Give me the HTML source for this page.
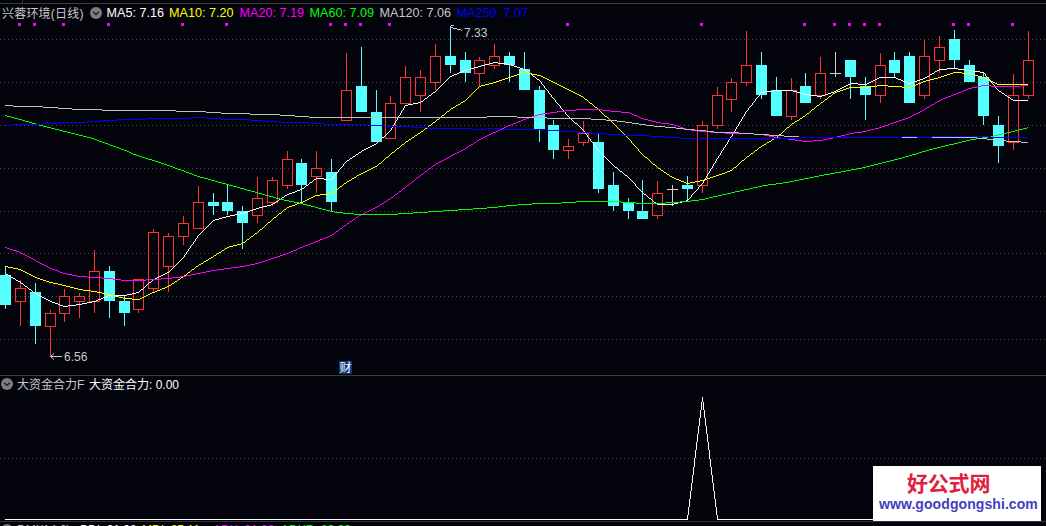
<!DOCTYPE html>
<html lang="zh-CN"><head><meta charset="utf-8"><title>兴蓉环境(日线)</title>
<style>
html,body{margin:0;padding:0;background:#03030b;}
body{width:1046px;height:526px;overflow:hidden;position:relative;font-family:"Liberation Sans","Noto Sans CJK SC",sans-serif;}
svg{position:absolute;left:0;top:0;display:block}
.gd{stroke:#454545;stroke-width:1;stroke-dasharray:1 3}
.t{position:absolute;white-space:nowrap;font-size:12px;line-height:14px;color:#c8c8c8}
.t span{position:absolute;top:0}
.t span.l{font-size:12.6px;top:1px}
.ic{position:absolute;width:12px;height:12px;border-radius:50%;background:#7d7d7d}
.ic svg{left:0;top:0}
#wm{position:absolute;left:873px;top:466px;width:168px;height:55px;background:#fff}
#wm .a{position:absolute;left:34px;top:5px;font-size:21px;line-height:26px;font-weight:bold;color:#e0203c;white-space:nowrap;letter-spacing:-0.2px}
#wm .b{position:absolute;left:6px;top:29.5px;font-size:14px;line-height:16px;font-weight:bold;color:#4040c0;white-space:nowrap;letter-spacing:0.08px}
#cai{position:absolute;left:339px;top:361px;width:13px;height:13px;background:#0a3a7c;color:#fff;font-size:12px;line-height:15.5px;text-align:center;overflow:hidden}
</style></head><body>
<svg width="1046" height="526" viewBox="0 0 1046 526">
<g shape-rendering="crispEdges">
<line x1="0" y1="39.5" x2="1046" y2="39.5" class="gd"/>
<line x1="0" y1="82.5" x2="1046" y2="82.5" class="gd"/>
<line x1="0" y1="125.5" x2="1046" y2="125.5" class="gd"/>
<line x1="0" y1="168.5" x2="1046" y2="168.5" class="gd"/>
<line x1="0" y1="211.5" x2="1046" y2="211.5" class="gd"/>
<line x1="0" y1="253.5" x2="1046" y2="253.5" class="gd"/>
<line x1="0" y1="296.5" x2="1046" y2="296.5" class="gd"/>
<line x1="0" y1="339.5" x2="1046" y2="339.5" class="gd"/>
<line x1="0" y1="458.5" x2="1046" y2="458.5" class="gd"/>
<rect x="0" y="3" width="1046" height="1" fill="#3c3c3c"/>
<rect x="22" y="0" width="1" height="3" fill="#3c3c3c"/>
<rect x="0" y="375" width="1046" height="1" fill="#3c3c3c"/>
<rect x="0" y="521" width="1046" height="1" fill="#333"/>
<rect x="5" y="266" width="1" height="43" fill="#54ffff"/>
<rect x="0" y="275" width="11" height="30" fill="#54ffff"/>
<rect x="20" y="280" width="1" height="8" fill="#ff3232"/>
<rect x="20" y="301" width="1" height="25" fill="#ff3232"/>
<rect x="15.5" y="288.5" width="10" height="13" fill="none" stroke="#ff3232" stroke-width="1"/>
<rect x="35" y="283" width="1" height="61" fill="#54ffff"/>
<rect x="30" y="292" width="11" height="34" fill="#54ffff"/>
<rect x="50" y="310" width="1" height="3" fill="#ff3232"/>
<rect x="50" y="326" width="1" height="30" fill="#ff3232"/>
<rect x="45.5" y="313.5" width="10" height="13" fill="none" stroke="#ff3232" stroke-width="1"/>
<rect x="64" y="289" width="1" height="7" fill="#ff3232"/>
<rect x="64" y="313" width="1" height="9" fill="#ff3232"/>
<rect x="59.5" y="296.5" width="10" height="17" fill="none" stroke="#ff3232" stroke-width="1"/>
<rect x="79" y="293" width="1" height="3" fill="#ff3232"/>
<rect x="79" y="301" width="1" height="17" fill="#ff3232"/>
<rect x="74.5" y="296.5" width="10" height="5" fill="none" stroke="#ff3232" stroke-width="1"/>
<rect x="94" y="250" width="1" height="21" fill="#ff3232"/>
<rect x="94" y="301" width="1" height="12" fill="#ff3232"/>
<rect x="89.5" y="271.5" width="10" height="30" fill="none" stroke="#ff3232" stroke-width="1"/>
<rect x="109" y="266" width="1" height="52" fill="#54ffff"/>
<rect x="104" y="271" width="11" height="30" fill="#54ffff"/>
<rect x="124" y="296" width="1" height="30" fill="#54ffff"/>
<rect x="119" y="301" width="11" height="12" fill="#54ffff"/>
<rect x="138" y="309" width="1" height="4" fill="#ff3232"/>
<rect x="133.5" y="279.5" width="10" height="30" fill="none" stroke="#ff3232" stroke-width="1"/>
<rect x="153" y="229" width="1" height="3" fill="#ff3232"/>
<rect x="153" y="288" width="1" height="4" fill="#ff3232"/>
<rect x="148.5" y="232.5" width="10" height="56" fill="none" stroke="#ff3232" stroke-width="1"/>
<rect x="168" y="233" width="1" height="3" fill="#ff3232"/>
<rect x="168" y="266" width="1" height="26" fill="#ff3232"/>
<rect x="163.5" y="236.5" width="10" height="30" fill="none" stroke="#ff3232" stroke-width="1"/>
<rect x="183" y="216" width="1" height="7" fill="#ff3232"/>
<rect x="183" y="236" width="1" height="9" fill="#ff3232"/>
<rect x="178.5" y="223.5" width="10" height="13" fill="none" stroke="#ff3232" stroke-width="1"/>
<rect x="198" y="186" width="1" height="16" fill="#ff3232"/>
<rect x="193.5" y="202.5" width="10" height="26" fill="none" stroke="#ff3232" stroke-width="1"/>
<rect x="213" y="193" width="1" height="22" fill="#54ffff"/>
<rect x="208" y="202" width="11" height="4" fill="#54ffff"/>
<rect x="227" y="185" width="1" height="30" fill="#54ffff"/>
<rect x="222" y="202" width="11" height="9" fill="#54ffff"/>
<rect x="242" y="206" width="1" height="43" fill="#54ffff"/>
<rect x="237" y="211" width="11" height="12" fill="#54ffff"/>
<rect x="257" y="177" width="1" height="21" fill="#ff3232"/>
<rect x="257" y="215" width="1" height="8" fill="#ff3232"/>
<rect x="252.5" y="198.5" width="10" height="17" fill="none" stroke="#ff3232" stroke-width="1"/>
<rect x="272" y="177" width="1" height="3" fill="#ff3232"/>
<rect x="272" y="202" width="1" height="4" fill="#ff3232"/>
<rect x="267.5" y="180.5" width="10" height="22" fill="none" stroke="#ff3232" stroke-width="1"/>
<rect x="287" y="151" width="1" height="8" fill="#ff3232"/>
<rect x="287" y="185" width="1" height="4" fill="#ff3232"/>
<rect x="282.5" y="159.5" width="10" height="26" fill="none" stroke="#ff3232" stroke-width="1"/>
<rect x="301" y="159" width="1" height="43" fill="#54ffff"/>
<rect x="296" y="163" width="11" height="22" fill="#54ffff"/>
<rect x="316" y="151" width="1" height="17" fill="#ff3232"/>
<rect x="316" y="176" width="1" height="17" fill="#ff3232"/>
<rect x="311.5" y="168.5" width="10" height="8" fill="none" stroke="#ff3232" stroke-width="1"/>
<rect x="331" y="159" width="1" height="52" fill="#54ffff"/>
<rect x="326" y="172" width="11" height="30" fill="#54ffff"/>
<rect x="346" y="53" width="1" height="37" fill="#ff3232"/>
<rect x="341.5" y="90.5" width="10" height="30" fill="none" stroke="#ff3232" stroke-width="1"/>
<rect x="361" y="47" width="1" height="65" fill="#54ffff"/>
<rect x="356" y="86" width="11" height="26" fill="#54ffff"/>
<rect x="376" y="90" width="1" height="52" fill="#54ffff"/>
<rect x="371" y="112" width="11" height="30" fill="#54ffff"/>
<rect x="390" y="96" width="1" height="7" fill="#ff3232"/>
<rect x="385.5" y="103.5" width="10" height="35" fill="none" stroke="#ff3232" stroke-width="1"/>
<rect x="405" y="66" width="1" height="11" fill="#ff3232"/>
<rect x="400.5" y="77.5" width="10" height="26" fill="none" stroke="#ff3232" stroke-width="1"/>
<rect x="420" y="70" width="1" height="7" fill="#ff3232"/>
<rect x="420" y="95" width="1" height="17" fill="#ff3232"/>
<rect x="415.5" y="77.5" width="10" height="18" fill="none" stroke="#ff3232" stroke-width="1"/>
<rect x="435" y="44" width="1" height="12" fill="#ff3232"/>
<rect x="435" y="82" width="1" height="8" fill="#ff3232"/>
<rect x="430.5" y="56.5" width="10" height="26" fill="none" stroke="#ff3232" stroke-width="1"/>
<rect x="450" y="26" width="1" height="47" fill="#54ffff"/>
<rect x="445" y="56" width="11" height="9" fill="#54ffff"/>
<rect x="465" y="52" width="1" height="30" fill="#54ffff"/>
<rect x="460" y="60" width="11" height="13" fill="#54ffff"/>
<rect x="479" y="57" width="1" height="3" fill="#ff3232"/>
<rect x="479" y="73" width="1" height="13" fill="#ff3232"/>
<rect x="474.5" y="60.5" width="10" height="13" fill="none" stroke="#ff3232" stroke-width="1"/>
<rect x="494" y="44" width="1" height="12" fill="#ff3232"/>
<rect x="494" y="65" width="1" height="4" fill="#ff3232"/>
<rect x="489.5" y="56.5" width="10" height="9" fill="none" stroke="#ff3232" stroke-width="1"/>
<rect x="509" y="52" width="1" height="30" fill="#54ffff"/>
<rect x="504" y="56" width="11" height="9" fill="#54ffff"/>
<rect x="524" y="52" width="1" height="38" fill="#54ffff"/>
<rect x="519" y="69" width="11" height="21" fill="#54ffff"/>
<rect x="539" y="86" width="1" height="56" fill="#54ffff"/>
<rect x="534" y="90" width="11" height="39" fill="#54ffff"/>
<rect x="553" y="120" width="1" height="39" fill="#54ffff"/>
<rect x="548" y="125" width="11" height="25" fill="#54ffff"/>
<rect x="568" y="139" width="1" height="7" fill="#ff3232"/>
<rect x="568" y="150" width="1" height="9" fill="#ff3232"/>
<rect x="563.5" y="146.5" width="10" height="4" fill="none" stroke="#ff3232" stroke-width="1"/>
<rect x="583" y="121" width="1" height="12" fill="#ff3232"/>
<rect x="583" y="142" width="1" height="4" fill="#ff3232"/>
<rect x="578.5" y="133.5" width="10" height="9" fill="none" stroke="#ff3232" stroke-width="1"/>
<rect x="598" y="133" width="1" height="60" fill="#54ffff"/>
<rect x="593" y="142" width="11" height="47" fill="#54ffff"/>
<rect x="613" y="172" width="1" height="39" fill="#54ffff"/>
<rect x="608" y="185" width="11" height="21" fill="#54ffff"/>
<rect x="628" y="198" width="1" height="21" fill="#54ffff"/>
<rect x="623" y="202" width="11" height="9" fill="#54ffff"/>
<rect x="642" y="180" width="1" height="39" fill="#54ffff"/>
<rect x="637" y="211" width="11" height="8" fill="#54ffff"/>
<rect x="657" y="181" width="1" height="12" fill="#ff3232"/>
<rect x="657" y="215" width="1" height="4" fill="#ff3232"/>
<rect x="652.5" y="193.5" width="10" height="22" fill="none" stroke="#ff3232" stroke-width="1"/>
<rect x="672" y="185" width="1" height="21" fill="#d0d0d0"/>
<rect x="667" y="189" width="11" height="1" fill="#d0d0d0"/>
<rect x="687" y="176" width="1" height="26" fill="#54ffff"/>
<rect x="682" y="185" width="11" height="4" fill="#54ffff"/>
<rect x="702" y="121" width="1" height="4" fill="#ff3232"/>
<rect x="702" y="185" width="1" height="8" fill="#ff3232"/>
<rect x="697.5" y="125.5" width="10" height="60" fill="none" stroke="#ff3232" stroke-width="1"/>
<rect x="717" y="87" width="1" height="8" fill="#ff3232"/>
<rect x="717" y="125" width="1" height="4" fill="#ff3232"/>
<rect x="712.5" y="95.5" width="10" height="30" fill="none" stroke="#ff3232" stroke-width="1"/>
<rect x="731" y="78" width="1" height="4" fill="#ff3232"/>
<rect x="731" y="99" width="1" height="13" fill="#ff3232"/>
<rect x="726.5" y="82.5" width="10" height="17" fill="none" stroke="#ff3232" stroke-width="1"/>
<rect x="746" y="31" width="1" height="34" fill="#ff3232"/>
<rect x="746" y="82" width="1" height="4" fill="#ff3232"/>
<rect x="741.5" y="65.5" width="10" height="17" fill="none" stroke="#ff3232" stroke-width="1"/>
<rect x="761" y="52" width="1" height="47" fill="#54ffff"/>
<rect x="756" y="65" width="11" height="30" fill="#54ffff"/>
<rect x="776" y="77" width="1" height="39" fill="#54ffff"/>
<rect x="771" y="90" width="11" height="26" fill="#54ffff"/>
<rect x="791" y="78" width="1" height="12" fill="#ff3232"/>
<rect x="791" y="116" width="1" height="4" fill="#ff3232"/>
<rect x="786.5" y="90.5" width="10" height="26" fill="none" stroke="#ff3232" stroke-width="1"/>
<rect x="805" y="73" width="1" height="30" fill="#54ffff"/>
<rect x="800" y="86" width="11" height="17" fill="#54ffff"/>
<rect x="820" y="57" width="1" height="16" fill="#ff3232"/>
<rect x="820" y="95" width="1" height="4" fill="#ff3232"/>
<rect x="815.5" y="73.5" width="10" height="22" fill="none" stroke="#ff3232" stroke-width="1"/>
<rect x="835" y="52" width="1" height="25" fill="#d0d0d0"/>
<rect x="830" y="73" width="11" height="1" fill="#d0d0d0"/>
<rect x="850" y="60" width="1" height="39" fill="#54ffff"/>
<rect x="845" y="60" width="11" height="17" fill="#54ffff"/>
<rect x="865" y="77" width="1" height="43" fill="#54ffff"/>
<rect x="860" y="86" width="11" height="9" fill="#54ffff"/>
<rect x="880" y="53" width="1" height="12" fill="#ff3232"/>
<rect x="880" y="95" width="1" height="8" fill="#ff3232"/>
<rect x="875.5" y="65.5" width="10" height="30" fill="none" stroke="#ff3232" stroke-width="1"/>
<rect x="894" y="52" width="1" height="25" fill="#54ffff"/>
<rect x="889" y="60" width="11" height="13" fill="#54ffff"/>
<rect x="909" y="52" width="1" height="51" fill="#54ffff"/>
<rect x="904" y="56" width="11" height="47" fill="#54ffff"/>
<rect x="924" y="40" width="1" height="16" fill="#ff3232"/>
<rect x="924" y="95" width="1" height="4" fill="#ff3232"/>
<rect x="919.5" y="56.5" width="10" height="39" fill="none" stroke="#ff3232" stroke-width="1"/>
<rect x="939" y="36" width="1" height="11" fill="#ff3232"/>
<rect x="939" y="60" width="1" height="13" fill="#ff3232"/>
<rect x="934.5" y="47.5" width="10" height="13" fill="none" stroke="#ff3232" stroke-width="1"/>
<rect x="954" y="30" width="1" height="39" fill="#54ffff"/>
<rect x="949" y="39" width="11" height="21" fill="#54ffff"/>
<rect x="969" y="60" width="1" height="22" fill="#54ffff"/>
<rect x="964" y="65" width="11" height="17" fill="#54ffff"/>
<rect x="983" y="73" width="1" height="52" fill="#54ffff"/>
<rect x="978" y="77" width="11" height="39" fill="#54ffff"/>
<rect x="998" y="116" width="1" height="47" fill="#54ffff"/>
<rect x="993" y="125" width="11" height="21" fill="#54ffff"/>
<rect x="1013" y="74" width="1" height="21" fill="#ff3232"/>
<rect x="1013" y="142" width="1" height="8" fill="#ff3232"/>
<rect x="1008.5" y="95.5" width="10" height="47" fill="none" stroke="#ff3232" stroke-width="1"/>
<rect x="1028" y="31" width="1" height="29" fill="#ff3232"/>
<rect x="1028" y="95" width="1" height="4" fill="#ff3232"/>
<rect x="1023.5" y="60.5" width="10" height="35" fill="none" stroke="#ff3232" stroke-width="1"/>
<rect x="18" y="23" width="3" height="3" fill="#ff00ff"/>
<rect x="33" y="23" width="3" height="3" fill="#ff00ff"/>
<rect x="62" y="23" width="3" height="3" fill="#ff00ff"/>
<rect x="107" y="23" width="3" height="3" fill="#ff00ff"/>
<rect x="181" y="23" width="3" height="3" fill="#ff00ff"/>
<rect x="225" y="23" width="3" height="3" fill="#ff00ff"/>
<rect x="329" y="23" width="3" height="3" fill="#ff00ff"/>
<rect x="344" y="23" width="3" height="3" fill="#ff00ff"/>
<rect x="359" y="23" width="3" height="3" fill="#ff00ff"/>
<rect x="388" y="23" width="3" height="3" fill="#ff00ff"/>
<rect x="566" y="23" width="3" height="3" fill="#ff00ff"/>
<rect x="700" y="23" width="3" height="3" fill="#ff00ff"/>
<rect x="803" y="23" width="3" height="3" fill="#ff00ff"/>
<rect x="833" y="23" width="3" height="3" fill="#ff00ff"/>
<rect x="848" y="23" width="3" height="3" fill="#ff00ff"/>
<rect x="863" y="23" width="3" height="3" fill="#ff00ff"/>
<rect x="878" y="23" width="3" height="3" fill="#ff00ff"/>
<rect x="952" y="23" width="3" height="3" fill="#ff00ff"/>
<rect x="967" y="23" width="3" height="3" fill="#ff00ff"/>
<rect x="1011" y="23" width="3" height="3" fill="#ff00ff"/>
</g>
<g shape-rendering="crispEdges">
<path fill="#ffffff" d="M18 281h2v1h-2zM151 281h1v1h-1zM63 306h5v1h-5zM31 290h1v1h-1zM140 290h1v1h-1zM38 295h2v1h-2zM108 295h19v1h-19zM393 125h1v1h-1zM578 125h1v1h-1zM738 125h1v1h-1zM25 286h2v1h-2zM145 286h1v1h-1zM400 113h1v1h-1zM565 113h1v1h-1zM745 113h1v1h-1zM478 66h3v1h-3zM514 66h3v1h-3zM391 128h1v1h-1zM581 128h1v1h-1zM736 128h1v1h-1zM429 95h2v1h-2zM551 95h1v1h-1zM759 95h1v1h-1zM809 95h8v1h-8zM822 95h3v1h-3zM1005 95h2v1h-2zM467 69h4v1h-4zM523 69h2v1h-2zM939 69h8v1h-8zM958 69h8v1h-8zM44 298h2v1h-2zM101 298h2v1h-2zM457 73h2v1h-2zM529 73h2v1h-2zM932 73h2v1h-2zM984 73h1v1h-1zM450 76h2v1h-2zM533 76h2v1h-2zM927 76h2v1h-2zM986 76h1v1h-1zM210 223h1v1h-1zM55 303h3v1h-3zM82 303h5v1h-5zM27 287h1v1h-1zM144 287h1v1h-1zM350 158h2v1h-2zM606 158h1v1h-1zM717 158h1v1h-1zM447 79h1v1h-1zM537 79h2v1h-2zM875 79h2v1h-2zM898 79h3v1h-3zM920 79h3v1h-3zM989 79h1v1h-1zM449 77h1v1h-1zM535 77h1v1h-1zM879 77h17v1h-17zM925 77h2v1h-2zM987 77h1v1h-1zM471 68h3v1h-3zM520 68h3v1h-3zM947 68h11v1h-11zM333 176h1v1h-1zM627 176h1v1h-1zM706 176h1v1h-1zM436 90h1v1h-1zM547 90h1v1h-1zM773 90h20v1h-20zM836 90h2v1h-2zM998 90h1v1h-1zM267 205h4v1h-4zM413 103h5v1h-5zM557 103h1v1h-1zM752 103h1v1h-1zM244 212h3v1h-3zM440 86h1v1h-1zM544 86h1v1h-1zM844 86h2v1h-2zM995 86h1v1h-1zM292 192h3v1h-3zM642 192h1v1h-1zM694 192h1v1h-1zM387 133h1v1h-1zM585 133h1v1h-1zM733 133h1v1h-1zM423 100h1v1h-1zM555 100h1v1h-1zM755 100h1v1h-1zM1013 100h15v1h-15zM222 217h4v1h-4zM276 201h2v1h-2zM653 201h1v1h-1zM682 201h4v1h-4zM310 182h2v1h-2zM633 182h1v1h-1zM703 182h1v1h-1zM442 84h1v1h-1zM542 84h1v1h-1zM848 84h2v1h-2zM858 84h9v1h-9zM993 84h1v1h-1zM333 177h1v1h-1zM628 177h1v1h-1zM706 177h1v1h-1zM489 63h4v1h-4zM498 63h8v1h-8zM421 101h2v1h-2zM555 101h1v1h-1zM754 101h1v1h-1zM445 81h1v1h-1zM540 81h1v1h-1zM871 81h2v1h-2zM903 81h3v1h-3zM914 81h3v1h-3zM990 81h1v1h-1zM462 71h2v1h-2zM527 71h1v1h-1zM935 71h2v1h-2zM973 71h7v1h-7zM432 93h1v1h-1zM549 93h1v1h-1zM760 93h1v1h-1zM800 93h4v1h-4zM828 93h3v1h-3zM1002 93h2v1h-2zM361 151h1v1h-1zM599 151h1v1h-1zM721 151h1v1h-1zM345 162h1v1h-1zM610 162h1v1h-1zM715 162h1v1h-1zM368 147h2v1h-2zM596 147h1v1h-1zM724 147h1v1h-1zM379 140h1v1h-1zM590 140h1v1h-1zM728 140h1v1h-1zM36 294h2v1h-2zM127 294h5v1h-5zM343 165h1v1h-1zM613 165h1v1h-1zM713 165h1v1h-1zM195 239h1v1h-1zM198 235h1v1h-1zM273 203h2v1h-2zM656 203h1v1h-1zM674 203h4v1h-4zM279 199h2v1h-2zM651 199h1v1h-1zM688 199h1v1h-1zM309 183h1v1h-1zM634 183h1v1h-1zM702 183h1v1h-1zM52 302h3v1h-3zM87 302h5v1h-5zM337 172h1v1h-1zM622 172h1v1h-1zM709 172h1v1h-1zM446 80h1v1h-1zM539 80h1v1h-1zM873 80h2v1h-2zM901 80h2v1h-2zM917 80h3v1h-3zM990 80h1v1h-1zM443 83h1v1h-1zM541 83h1v1h-1zM850 83h8v1h-8zM867 83h2v1h-2zM908 83h3v1h-3zM992 83h1v1h-1zM382 137h2v1h-2zM588 137h1v1h-1zM730 137h1v1h-1zM230 215h5v1h-5zM285 195h2v1h-2zM646 195h1v1h-1zM691 195h1v1h-1zM213 220h2v1h-2zM278 200h1v1h-1zM652 200h1v1h-1zM686 200h2v1h-2zM178 262h1v1h-1zM271 204h2v1h-2zM657 204h17v1h-17zM397 119h1v1h-1zM571 119h1v1h-1zM741 119h1v1h-1zM341 167h1v1h-1zM615 167h2v1h-2zM712 167h1v1h-1zM10 276h1v1h-1zM159 276h2v1h-2zM428 96h1v1h-1zM551 96h1v1h-1zM758 96h1v1h-1zM817 96h5v1h-5zM1007 96h1v1h-1zM300 189h2v1h-2zM639 189h1v1h-1zM697 189h1v1h-1zM356 154h2v1h-2zM602 154h1v1h-1zM720 154h1v1h-1zM418 102h3v1h-3zM556 102h1v1h-1zM753 102h1v1h-1zM433 92h2v1h-2zM548 92h1v1h-1zM761 92h4v1h-4zM797 92h3v1h-3zM831 92h3v1h-3zM1001 92h1v1h-1zM33 292h2v1h-2zM136 292h3v1h-3zM256 208h3v1h-3zM400 114h1v1h-1zM566 114h1v1h-1zM744 114h1v1h-1zM48 300h2v1h-2zM96 300h2v1h-2zM452 75h2v1h-2zM532 75h1v1h-1zM929 75h1v1h-1zM985 75h1v1h-1zM403 109h1v1h-1zM562 109h1v1h-1zM748 109h1v1h-1zM408 104h5v1h-5zM558 104h1v1h-1zM752 104h1v1h-1zM305 186h1v1h-1zM636 186h1v1h-1zM699 186h1v1h-1zM448 78h1v1h-1zM536 78h1v1h-1zM877 78h2v1h-2zM896 78h2v1h-2zM923 78h2v1h-2zM988 78h1v1h-1zM485 64h4v1h-4zM506 64h5v1h-5zM46 299h2v1h-2zM98 299h3v1h-3zM336 173h1v1h-1zM623 173h1v1h-1zM708 173h1v1h-1zM275 202h1v1h-1zM654 202h2v1h-2zM678 202h4v1h-4zM401 112h1v1h-1zM565 112h1v1h-1zM745 112h1v1h-1zM316 178h8v1h-8zM332 178h1v1h-1zM629 178h1v1h-1zM705 178h1v1h-1zM201 232h1v1h-1zM435 91h1v1h-1zM548 91h1v1h-1zM765 91h8v1h-8zM793 91h4v1h-4zM834 91h2v1h-2zM999 91h2v1h-2zM392 126h1v1h-1zM579 126h1v1h-1zM737 126h1v1h-1zM21 283h2v1h-2zM148 283h1v1h-1zM186 252h1v1h-1zM40 296h2v1h-2zM106 296h2v1h-2zM189 248h1v1h-1zM389 131h1v1h-1zM584 131h1v1h-1zM734 131h1v1h-1zM338 171h1v1h-1zM620 171h2v1h-2zM709 171h1v1h-1zM314 179h2v1h-2zM324 179h8v1h-8zM630 179h1v1h-1zM704 179h1v1h-1zM362 150h2v1h-2zM598 150h1v1h-1zM722 150h1v1h-1zM395 121h1v1h-1zM573 121h1v1h-1zM740 121h1v1h-1zM355 155h1v1h-1zM603 155h1v1h-1zM719 155h1v1h-1zM50 301h2v1h-2zM92 301h4v1h-4zM398 116h1v1h-1zM568 116h1v1h-1zM743 116h1v1h-1zM395 122h1v1h-1zM574 122h1v1h-1zM739 122h1v1h-1zM281 198h1v1h-1zM649 198h2v1h-2zM689 198h1v1h-1zM464 70h3v1h-3zM525 70h2v1h-2zM937 70h2v1h-2zM966 70h7v1h-7zM359 152h2v1h-2zM600 152h1v1h-1zM721 152h1v1h-1zM344 163h1v1h-1zM611 163h1v1h-1zM714 163h1v1h-1zM390 130h1v1h-1zM583 130h1v1h-1zM735 130h1v1h-1zM250 210h3v1h-3zM399 115h1v1h-1zM567 115h1v1h-1zM744 115h1v1h-1zM444 82h1v1h-1zM541 82h1v1h-1zM869 82h2v1h-2zM906 82h2v1h-2zM911 82h3v1h-3zM991 82h1v1h-1zM282 197h2v1h-2zM648 197h1v1h-1zM690 197h1v1h-1zM343 164h1v1h-1zM612 164h1v1h-1zM713 164h1v1h-1zM60 305h3v1h-3zM68 305h8v1h-8zM425 98h2v1h-2zM553 98h1v1h-1zM756 98h1v1h-1zM1010 98h1v1h-1zM347 160h2v1h-2zM608 160h1v1h-1zM716 160h1v1h-1zM13 278h2v1h-2zM155 278h2v1h-2zM431 94h1v1h-1zM550 94h1v1h-1zM759 94h1v1h-1zM804 94h5v1h-5zM825 94h3v1h-3zM1004 94h1v1h-1zM394 123h1v1h-1zM575 123h2v1h-2zM739 123h1v1h-1zM438 88h1v1h-1zM545 88h1v1h-1zM840 88h2v1h-2zM996 88h1v1h-1zM358 153h1v1h-1zM601 153h1v1h-1zM720 153h1v1h-1zM493 62h5v1h-5zM384 136h1v1h-1zM587 136h1v1h-1zM731 136h1v1h-1zM284 196h1v1h-1zM647 196h1v1h-1zM691 196h1v1h-1zM313 180h1v1h-1zM631 180h1v1h-1zM704 180h1v1h-1zM474 67h4v1h-4zM517 67h3v1h-3zM29 289h2v1h-2zM141 289h2v1h-2zM403 108h1v1h-1zM561 108h1v1h-1zM748 108h1v1h-1zM173 267h1v1h-1zM58 304h2v1h-2zM76 304h6v1h-6zM263 206h4v1h-4zM302 188h2v1h-2zM638 188h1v1h-1zM698 188h1v1h-1zM287 194h2v1h-2zM644 194h2v1h-2zM692 194h1v1h-1zM240 213h4v1h-4zM5 273h1v1h-1zM165 273h2v1h-2zM219 218h3v1h-3zM437 89h1v1h-1zM546 89h1v1h-1zM838 89h2v1h-2zM997 89h1v1h-1zM205 228h1v1h-1zM481 65h4v1h-4zM511 65h3v1h-3zM439 87h1v1h-1zM544 87h1v1h-1zM842 87h2v1h-2zM995 87h1v1h-1zM459 72h3v1h-3zM528 72h1v1h-1zM934 72h1v1h-1zM980 72h4v1h-4zM16 280h2v1h-2zM152 280h1v1h-1zM340 168h1v1h-1zM617 168h1v1h-1zM711 168h1v1h-1zM226 216h4v1h-4zM185 254h1v1h-1zM197 237h1v1h-1zM297 190h3v1h-3zM640 190h1v1h-1zM696 190h1v1h-1zM385 135h1v1h-1zM587 135h1v1h-1zM732 135h1v1h-1zM11 277h2v1h-2zM157 277h2v1h-2zM374 144h2v1h-2zM593 144h1v1h-1zM726 144h1v1h-1zM306 185h2v1h-2zM635 185h1v1h-1zM700 185h1v1h-1zM20 282h1v1h-1zM149 282h2v1h-2zM405 105h3v1h-3zM559 105h1v1h-1zM751 105h1v1h-1zM32 291h1v1h-1zM139 291h1v1h-1zM235 214h5v1h-5zM378 141h1v1h-1zM591 141h1v1h-1zM728 141h1v1h-1zM215 219h4v1h-4zM15 279h1v1h-1zM153 279h2v1h-2zM8 275h2v1h-2zM161 275h2v1h-2zM35 293h1v1h-1zM132 293h4v1h-4zM377 142h1v1h-1zM592 142h1v1h-1zM727 142h1v1h-1zM454 74h3v1h-3zM531 74h1v1h-1zM930 74h2v1h-2zM985 74h1v1h-1zM24 285h1v1h-1zM146 285h1v1h-1zM6 274h2v1h-2zM163 274h2v1h-2zM177 263h1v1h-1zM441 85h1v1h-1zM543 85h1v1h-1zM846 85h2v1h-2zM994 85h1v1h-1zM42 297h2v1h-2zM103 297h3v1h-3zM349 159h1v1h-1zM607 159h1v1h-1zM716 159h1v1h-1zM167 272h2v1h-2zM289 193h3v1h-3zM643 193h1v1h-1zM693 193h1v1h-1zM247 211h3v1h-3zM352 157h1v1h-1zM605 157h1v1h-1zM718 157h1v1h-1zM364 149h2v1h-2zM597 149h1v1h-1zM723 149h1v1h-1zM427 97h1v1h-1zM552 97h1v1h-1zM757 97h1v1h-1zM1008 97h2v1h-2zM28 288h1v1h-1zM143 288h1v1h-1zM424 99h1v1h-1zM554 99h1v1h-1zM755 99h1v1h-1zM1011 99h2v1h-2zM370 146h2v1h-2zM595 146h1v1h-1zM725 146h1v1h-1zM397 118h1v1h-1zM570 118h1v1h-1zM742 118h1v1h-1zM180 260h1v1h-1zM253 209h3v1h-3zM212 221h1v1h-1zM308 184h1v1h-1zM635 184h1v1h-1zM701 184h1v1h-1zM335 174h1v1h-1zM624 174h1v1h-1zM707 174h1v1h-1zM401 111h1v1h-1zM564 111h1v1h-1zM746 111h1v1h-1zM295 191h2v1h-2zM641 191h1v1h-1zM695 191h1v1h-1zM404 107h1v1h-1zM560 107h1v1h-1zM749 107h1v1h-1zM402 110h1v1h-1zM563 110h1v1h-1zM747 110h1v1h-1zM259 207h4v1h-4zM304 187h1v1h-1zM637 187h1v1h-1zM698 187h1v1h-1zM404 106h1v1h-1zM560 106h1v1h-1zM750 106h1v1h-1zM188 250h1v1h-1zM200 233h1v1h-1zM172 268h1v1h-1zM353 156h2v1h-2zM604 156h1v1h-1zM718 156h1v1h-1zM366 148h2v1h-2zM596 148h1v1h-1zM723 148h1v1h-1zM346 161h1v1h-1zM609 161h1v1h-1zM715 161h1v1h-1zM380 139h1v1h-1zM590 139h1v1h-1zM729 139h1v1h-1zM376 143h1v1h-1zM593 143h1v1h-1zM727 143h1v1h-1zM23 284h1v1h-1zM147 284h1v1h-1zM175 265h1v1h-1zM338 170h1v1h-1zM619 170h1v1h-1zM710 170h1v1h-1zM207 226h1v1h-1zM188 249h1v1h-1zM191 245h1v1h-1zM381 138h1v1h-1zM589 138h1v1h-1zM730 138h1v1h-1zM372 145h2v1h-2zM594 145h1v1h-1zM725 145h1v1h-1zM396 120h1v1h-1zM572 120h1v1h-1zM741 120h1v1h-1zM182 258h1v1h-1zM194 241h1v1h-1zM339 169h1v1h-1zM618 169h1v1h-1zM710 169h1v1h-1zM179 261h1v1h-1zM392 127h1v1h-1zM580 127h1v1h-1zM736 127h1v1h-1zM170 270h1v1h-1zM202 231h1v1h-1zM388 132h1v1h-1zM584 132h1v1h-1zM733 132h1v1h-1zM342 166h1v1h-1zM614 166h1v1h-1zM712 166h1v1h-1zM190 247h1v1h-1zM334 175h1v1h-1zM625 175h2v1h-2zM707 175h1v1h-1zM206 227h1v1h-1zM391 129h1v1h-1zM582 129h1v1h-1zM735 129h1v1h-1zM197 236h1v1h-1zM398 117h1v1h-1zM569 117h1v1h-1zM742 117h1v1h-1zM386 134h1v1h-1zM586 134h1v1h-1zM732 134h1v1h-1zM193 243h1v1h-1zM209 224h1v1h-1zM174 266h1v1h-1zM190 246h1v1h-1zM312 181h1v1h-1zM632 181h1v1h-1zM703 181h1v1h-1zM186 253h1v1h-1zM184 256h1v1h-1zM181 259h1v1h-1zM193 242h1v1h-1zM394 124h1v1h-1zM577 124h1v1h-1zM738 124h1v1h-1zM204 229h1v1h-1zM169 271h1v1h-1zM184 255h1v1h-1zM196 238h1v1h-1zM211 222h1v1h-1zM208 225h1v1h-1zM187 251h1v1h-1zM199 234h1v1h-1zM176 264h1v1h-1zM192 244h1v1h-1zM203 230h1v1h-1zM183 257h1v1h-1zM195 240h1v1h-1zM171 269h1v1h-1z"/>
<path fill="#ffff00" d="M396 149h1v1h-1zM638 149h1v1h-1zM757 149h1v1h-1zM107 294h4v1h-4zM148 294h2v1h-2zM13 268h5v1h-5zM194 268h1v1h-1zM53 283h5v1h-5zM172 283h2v1h-2zM499 80h3v1h-3zM549 80h2v1h-2zM926 80h4v1h-4zM989 80h2v1h-2zM359 174h2v1h-2zM667 174h2v1h-2zM719 174h3v1h-3zM475 90h1v1h-1zM569 90h2v1h-2zM840 90h3v1h-3zM390 154h1v1h-1zM642 154h1v1h-1zM750 154h1v1h-1zM395 150h1v1h-1zM638 150h1v1h-1zM755 150h2v1h-2zM440 117h1v1h-1zM607 117h1v1h-1zM802 117h1v1h-1zM78 289h5v1h-5zM160 289h2v1h-2zM379 163h2v1h-2zM652 163h1v1h-1zM739 163h1v1h-1zM274 217h2v1h-2zM371 168h2v1h-2zM658 168h2v1h-2zM733 168h1v1h-1zM352 178h2v1h-2zM674 178h2v1h-2zM707 178h3v1h-3zM405 142h1v1h-1zM631 142h1v1h-1zM767 142h2v1h-2zM29 274h2v1h-2zM186 274h1v1h-1zM517 74h3v1h-3zM532 74h5v1h-5zM947 74h3v1h-3zM971 74h4v1h-4zM399 147h1v1h-1zM636 147h1v1h-1zM759 147h2v1h-2zM479 86h2v1h-2zM561 86h2v1h-2zM869 86h8v1h-8zM888 86h14v1h-14zM911 86h2v1h-2zM58 284h4v1h-4zM171 284h1v1h-1zM383 160h1v1h-1zM649 160h1v1h-1zM742 160h2v1h-2zM496 81h3v1h-3zM551 81h2v1h-2zM923 81h3v1h-3zM991 81h2v1h-2zM485 84h4v1h-4zM557 84h2v1h-2zM916 84h2v1h-2zM997 84h31v1h-31zM508 77h3v1h-3zM543 77h2v1h-2zM938 77h3v1h-3zM982 77h3v1h-3zM33 276h2v1h-2zM183 276h1v1h-1zM375 166h2v1h-2zM656 166h1v1h-1zM736 166h1v1h-1zM347 181h2v1h-2zM681 181h3v1h-3zM695 181h5v1h-5zM514 75h3v1h-3zM537 75h4v1h-4zM944 75h3v1h-3zM975 75h3v1h-3zM493 82h3v1h-3zM553 82h2v1h-2zM921 82h2v1h-2zM993 82h2v1h-2zM267 223h1v1h-1zM481 85h4v1h-4zM559 85h2v1h-2zM877 85h11v1h-11zM913 85h3v1h-3zM478 87h1v1h-1zM563 87h2v1h-2zM849 87h20v1h-20zM902 87h9v1h-9zM83 290h8v1h-8zM157 290h3v1h-3zM505 78h3v1h-3zM545 78h2v1h-2zM934 78h4v1h-4zM985 78h2v1h-2zM408 140h1v1h-1zM630 140h1v1h-1zM771 140h1v1h-1zM369 169h2v1h-2zM660 169h1v1h-1zM732 169h1v1h-1zM25 272h2v1h-2zM188 272h2v1h-2zM305 200h2v1h-2zM18 269h3v1h-3zM192 269h2v1h-2zM132 299h8v1h-8zM453 107h2v1h-2zM595 107h2v1h-2zM815 107h1v1h-1zM502 79h3v1h-3zM547 79h2v1h-2zM930 79h4v1h-4zM987 79h2v1h-2zM111 295h4v1h-4zM146 295h2v1h-2zM460 103h1v1h-1zM590 103h2v1h-2zM820 103h1v1h-1zM406 141h2v1h-2zM631 141h1v1h-1zM769 141h2v1h-2zM62 285h4v1h-4zM169 285h2v1h-2zM351 179h1v1h-1zM676 179h3v1h-3zM704 179h3v1h-3zM456 105h2v1h-2zM593 105h1v1h-1zM817 105h2v1h-2zM5 266h3v1h-3zM196 266h2v1h-2zM511 76h3v1h-3zM541 76h2v1h-2zM941 76h3v1h-3zM978 76h4v1h-4zM520 73h3v1h-3zM527 73h5v1h-5zM950 73h3v1h-3zM962 73h9v1h-9zM243 242h2v1h-2zM489 83h4v1h-4zM555 83h2v1h-2zM918 83h3v1h-3zM995 83h2v1h-2zM357 175h2v1h-2zM669 175h1v1h-1zM716 175h3v1h-3zM43 280h3v1h-3zM177 280h1v1h-1zM221 251h1v1h-1zM115 296h4v1h-4zM144 296h2v1h-2zM344 183h2v1h-2zM686 183h4v1h-4zM433 122h2v1h-2zM612 122h1v1h-1zM794 122h1v1h-1zM213 256h1v1h-1zM394 151h1v1h-1zM639 151h1v1h-1zM754 151h1v1h-1zM21 270h2v1h-2zM191 270h1v1h-1zM204 261h2v1h-2zM444 114h1v1h-1zM603 114h1v1h-1zM806 114h1v1h-1zM278 214h1v1h-1zM320 194h8v1h-8zM354 177h2v1h-2zM672 177h2v1h-2zM710 177h3v1h-3zM367 170h2v1h-2zM661 170h2v1h-2zM730 170h2v1h-2zM461 102h2v1h-2zM589 102h1v1h-1zM821 102h2v1h-2zM346 182h1v1h-1zM684 182h2v1h-2zM690 182h5v1h-5zM397 148h2v1h-2zM637 148h1v1h-1zM758 148h1v1h-1zM447 111h2v1h-2zM600 111h1v1h-1zM810 111h1v1h-1zM289 206h3v1h-3zM386 157h2v1h-2zM645 157h2v1h-2zM746 157h1v1h-1zM391 153h1v1h-1zM641 153h1v1h-1zM751 153h2v1h-2zM97 292h5v1h-5zM152 292h3v1h-3zM523 72h4v1h-4zM953 72h9v1h-9zM282 211h1v1h-1zM435 121h1v1h-1zM611 121h1v1h-1zM795 121h2v1h-2zM271 220h1v1h-1zM123 298h9v1h-9zM140 298h2v1h-2zM286 208h1v1h-1zM40 279h3v1h-3zM178 279h2v1h-2zM477 88h1v1h-1zM565 88h2v1h-2zM846 88h3v1h-3zM229 246h4v1h-4zM472 93h1v1h-1zM575 93h2v1h-2zM833 93h2v1h-2zM365 171h2v1h-2zM663 171h1v1h-1zM727 171h3v1h-3zM411 138h1v1h-1zM628 138h1v1h-1zM774 138h2v1h-2zM300 202h3v1h-3zM258 231h1v1h-1zM119 297h4v1h-4zM142 297h2v1h-2zM381 162h1v1h-1zM651 162h1v1h-1zM740 162h1v1h-1zM70 287h4v1h-4zM165 287h2v1h-2zM262 228h1v1h-1zM401 145h1v1h-1zM634 145h1v1h-1zM762 145h2v1h-2zM392 152h2v1h-2zM640 152h1v1h-1zM753 152h1v1h-1zM432 123h1v1h-1zM613 123h1v1h-1zM792 123h2v1h-2zM424 129h1v1h-1zM619 129h1v1h-1zM785 129h1v1h-1zM237 244h4v1h-4zM356 176h1v1h-1zM670 176h2v1h-2zM713 176h3v1h-3zM335 190h1v1h-1zM49 282h4v1h-4zM174 282h1v1h-1zM412 137h2v1h-2zM627 137h1v1h-1zM776 137h1v1h-1zM458 104h2v1h-2zM592 104h1v1h-1zM819 104h1v1h-1zM209 258h2v1h-2zM315 195h5v1h-5zM436 120h1v1h-1zM610 120h1v1h-1zM797 120h2v1h-2zM339 187h1v1h-1zM417 134h1v1h-1zM624 134h1v1h-1zM779 134h2v1h-2zM466 99h1v1h-1zM585 99h2v1h-2zM825 99h2v1h-2zM361 173h2v1h-2zM666 173h1v1h-1zM722 173h3v1h-3zM363 172h2v1h-2zM664 172h2v1h-2zM725 172h2v1h-2zM222 250h2v1h-2zM409 139h2v1h-2zM629 139h1v1h-1zM772 139h2v1h-2zM311 197h2v1h-2zM214 255h2v1h-2zM449 110h1v1h-1zM599 110h1v1h-1zM811 110h1v1h-1zM102 293h5v1h-5zM150 293h2v1h-2zM421 131h2v1h-2zM621 131h1v1h-1zM783 131h1v1h-1zM66 286h4v1h-4zM167 286h2v1h-2zM476 89h1v1h-1zM567 89h2v1h-2zM843 89h3v1h-3zM227 247h2v1h-2zM349 180h2v1h-2zM679 180h2v1h-2zM700 180h4v1h-4zM439 118h1v1h-1zM608 118h1v1h-1zM800 118h2v1h-2zM404 143h1v1h-1zM632 143h1v1h-1zM766 143h1v1h-1zM46 281h3v1h-3zM175 281h2v1h-2zM415 135h2v1h-2zM625 135h1v1h-1zM778 135h1v1h-1zM402 144h2v1h-2zM633 144h1v1h-1zM764 144h2v1h-2zM385 158h1v1h-1zM647 158h1v1h-1zM745 158h1v1h-1zM373 167h2v1h-2zM657 167h1v1h-1zM734 167h2v1h-2zM425 128h2v1h-2zM618 128h1v1h-1zM786 128h1v1h-1zM247 239h2v1h-2zM463 101h2v1h-2zM588 101h1v1h-1zM823 101h1v1h-1zM8 267h5v1h-5zM195 267h1v1h-1zM455 106h1v1h-1zM594 106h1v1h-1zM816 106h1v1h-1zM292 205h3v1h-3zM467 98h1v1h-1zM584 98h1v1h-1zM827 98h1v1h-1zM219 252h2v1h-2zM307 199h2v1h-2zM211 257h2v1h-2zM343 184h1v1h-1zM203 262h1v1h-1zM74 288h4v1h-4zM162 288h3v1h-3zM414 136h1v1h-1zM626 136h1v1h-1zM777 136h1v1h-1zM471 94h1v1h-1zM577 94h2v1h-2zM832 94h1v1h-1zM474 91h1v1h-1zM571 91h2v1h-2zM837 91h3v1h-3zM423 130h1v1h-1zM620 130h1v1h-1zM784 130h1v1h-1zM428 126h1v1h-1zM616 126h1v1h-1zM789 126h1v1h-1zM450 109h1v1h-1zM598 109h1v1h-1zM812 109h2v1h-2zM287 207h2v1h-2zM273 218h1v1h-1zM473 92h1v1h-1zM573 92h2v1h-2zM835 92h2v1h-2zM233 245h4v1h-4zM297 203h3v1h-3zM382 161h1v1h-1zM650 161h1v1h-1zM741 161h1v1h-1zM277 215h1v1h-1zM451 108h2v1h-2zM597 108h1v1h-1zM814 108h1v1h-1zM249 238h1v1h-1zM91 291h6v1h-6zM155 291h2v1h-2zM241 243h2v1h-2zM303 201h2v1h-2zM378 164h1v1h-1zM653 164h2v1h-2zM738 164h1v1h-1zM253 235h1v1h-1zM199 264h2v1h-2zM37 278h3v1h-3zM180 278h1v1h-1zM427 127h1v1h-1zM617 127h1v1h-1zM787 127h2v1h-2zM35 277h2v1h-2zM181 277h2v1h-2zM470 95h1v1h-1zM579 95h2v1h-2zM831 95h1v1h-1zM400 146h1v1h-1zM635 146h1v1h-1zM761 146h1v1h-1zM431 124h1v1h-1zM614 124h1v1h-1zM791 124h1v1h-1zM389 155h1v1h-1zM643 155h1v1h-1zM749 155h1v1h-1zM284 209h2v1h-2zM441 116h1v1h-1zM605 116h2v1h-2zM803 116h2v1h-2zM31 275h2v1h-2zM184 275h2v1h-2zM23 271h2v1h-2zM190 271h1v1h-1zM264 226h1v1h-1zM257 232h1v1h-1zM295 204h2v1h-2zM27 273h2v1h-2zM187 273h1v1h-1zM260 229h2v1h-2zM328 193h4v1h-4zM469 96h1v1h-1zM581 96h2v1h-2zM829 96h2v1h-2zM225 248h2v1h-2zM442 115h2v1h-2zM604 115h1v1h-1zM805 115h1v1h-1zM217 253h2v1h-2zM334 191h1v1h-1zM437 119h2v1h-2zM609 119h1v1h-1zM799 119h1v1h-1zM446 112h1v1h-1zM601 112h1v1h-1zM809 112h1v1h-1zM268 222h2v1h-2zM445 113h1v1h-1zM602 113h1v1h-1zM807 113h2v1h-2zM201 263h2v1h-2zM420 132h1v1h-1zM622 132h1v1h-1zM782 132h1v1h-1zM279 213h2v1h-2zM384 159h1v1h-1zM648 159h1v1h-1zM744 159h1v1h-1zM251 236h2v1h-2zM255 233h2v1h-2zM429 125h2v1h-2zM615 125h1v1h-1zM790 125h1v1h-1zM332 192h2v1h-2zM336 189h2v1h-2zM388 156h1v1h-1zM644 156h1v1h-1zM747 156h2v1h-2zM283 210h1v1h-1zM340 186h2v1h-2zM224 249h1v1h-1zM266 224h1v1h-1zM281 212h1v1h-1zM270 221h1v1h-1zM259 230h1v1h-1zM263 227h1v1h-1zM418 133h2v1h-2zM623 133h1v1h-1zM781 133h1v1h-1zM313 196h2v1h-2zM216 254h1v1h-1zM208 259h1v1h-1zM465 100h1v1h-1zM587 100h1v1h-1zM824 100h1v1h-1zM468 97h1v1h-1zM583 97h1v1h-1zM828 97h1v1h-1zM246 240h1v1h-1zM309 198h2v1h-2zM250 237h1v1h-1zM338 188h1v1h-1zM377 165h1v1h-1zM655 165h1v1h-1zM737 165h1v1h-1zM265 225h1v1h-1zM254 234h1v1h-1zM342 185h1v1h-1zM206 260h2v1h-2zM198 265h1v1h-1zM272 219h1v1h-1zM276 216h1v1h-1zM245 241h1v1h-1z"/>
<path fill="#ff00ff" d="M320 239h3v1h-3zM953 94h3v1h-3zM67 274h5v1h-5zM191 274h5v1h-5zM576 109h26v1h-26zM924 109h1v1h-1zM523 119h3v1h-3zM644 119h4v1h-4zM902 119h3v1h-3zM513 123h3v1h-3zM661 123h8v1h-8zM890 123h3v1h-3zM491 133h2v1h-2zM725 133h29v1h-29zM849 133h5v1h-5zM977 86h4v1h-4zM991 86h30v1h-30zM496 131h2v1h-2zM699 131h11v1h-11zM862 131h5v1h-5zM535 115h3v1h-3zM634 115h3v1h-3zM912 115h2v1h-2zM981 85h10v1h-10zM1021 85h7v1h-7zM511 124h2v1h-2zM669 124h5v1h-5zM888 124h2v1h-2zM36 261h2v1h-2zM262 261h3v1h-3zM50 268h2v1h-2zM224 268h7v1h-7zM87 277h15v1h-15zM172 277h8v1h-8zM565 110h11v1h-11zM602 110h8v1h-8zM922 110h2v1h-2zM485 136h2v1h-2zM769 136h5v1h-5zM837 136h4v1h-4zM358 216h1v1h-1zM550 112h7v1h-7zM621 112h9v1h-9zM918 112h2v1h-2zM498 130h2v1h-2zM691 130h8v1h-8zM867 130h4v1h-4zM493 132h3v1h-3zM710 132h15v1h-15zM854 132h8v1h-8zM939 100h2v1h-2zM350 221h2v1h-2zM335 232h1v1h-1zM930 105h2v1h-2zM477 140h2v1h-2zM795 140h7v1h-7zM813 140h10v1h-10zM102 278h11v1h-11zM161 278h11v1h-11zM33 259h2v1h-2zM268 259h3v1h-3zM113 279h8v1h-8zM146 279h15v1h-15zM325 237h3v1h-3zM557 111h8v1h-8zM610 111h11v1h-11zM920 111h2v1h-2zM543 113h7v1h-7zM630 113h2v1h-2zM916 113h2v1h-2zM55 270h3v1h-3zM211 270h6v1h-6zM425 171h2v1h-2zM5 247h2v1h-2zM300 247h3v1h-3zM339 229h1v1h-1zM935 102h2v1h-2zM63 273h4v1h-4zM196 273h5v1h-5zM966 89h2v1h-2zM504 127h2v1h-2zM680 127h3v1h-3zM879 127h3v1h-3zM42 264h2v1h-2zM250 264h5v1h-5zM407 185h2v1h-2zM388 199h2v1h-2zM377 206h2v1h-2zM423 173h1v1h-1zM455 153h2v1h-2zM446 158h2v1h-2zM479 139h2v1h-2zM788 139h7v1h-7zM823 139h5v1h-5zM72 275h5v1h-5zM186 275h5v1h-5zM506 126h2v1h-2zM677 126h3v1h-3zM882 126h3v1h-3zM305 245h3v1h-3zM393 196h1v1h-1zM532 116h3v1h-3zM637 116h2v1h-2zM910 116h2v1h-2zM315 241h3v1h-3zM481 138h2v1h-2zM780 138h8v1h-8zM828 138h5v1h-5zM489 134h2v1h-2zM754 134h10v1h-10zM845 134h4v1h-4zM397 193h1v1h-1zM52 269h3v1h-3zM217 269h7v1h-7zM121 280h25v1h-25zM516 122h2v1h-2zM656 122h5v1h-5zM893 122h3v1h-3zM40 263h2v1h-2zM255 263h4v1h-4zM526 118h3v1h-3zM641 118h3v1h-3zM905 118h3v1h-3zM476 141h1v1h-1zM802 141h11v1h-11zM502 128h2v1h-2zM683 128h3v1h-3zM875 128h4v1h-4zM961 91h2v1h-2zM58 271h2v1h-2zM206 271h5v1h-5zM25 255h2v1h-2zM280 255h3v1h-3zM927 107h2v1h-2zM487 135h2v1h-2zM764 135h5v1h-5zM841 135h4v1h-4zM77 276h10v1h-10zM180 276h6v1h-6zM508 125h3v1h-3zM674 125h3v1h-3zM885 125h3v1h-3zM10 249h3v1h-3zM296 249h2v1h-2zM500 129h2v1h-2zM686 129h5v1h-5zM871 129h4v1h-4zM427 170h1v1h-1zM373 208h2v1h-2zM451 155h2v1h-2zM442 160h2v1h-2zM48 267h2v1h-2zM231 267h8v1h-8zM946 97h2v1h-2zM431 167h1v1h-1zM412 181h2v1h-2zM972 87h5v1h-5zM369 210h2v1h-2zM435 164h1v1h-1zM941 99h2v1h-2zM60 272h3v1h-3zM201 272h5v1h-5zM521 120h2v1h-2zM648 120h4v1h-4zM899 120h3v1h-3zM469 145h2v1h-2zM538 114h5v1h-5zM632 114h2v1h-2zM914 114h2v1h-2zM461 150h2v1h-2zM38 262h2v1h-2zM259 262h3v1h-3zM313 242h2v1h-2zM474 142h2v1h-2zM16 251h3v1h-3zM291 251h2v1h-2zM466 147h2v1h-2zM323 238h2v1h-2zM44 265h2v1h-2zM245 265h5v1h-5zM21 253h2v1h-2zM286 253h3v1h-3zM35 260h1v1h-1zM265 260h3v1h-3zM340 228h2v1h-2zM29 257h2v1h-2zM274 257h3v1h-3zM968 88h4v1h-4zM46 266h2v1h-2zM239 266h6v1h-6zM438 162h2v1h-2zM7 248h3v1h-3zM298 248h2v1h-2zM344 225h2v1h-2zM365 212h2v1h-2zM356 217h2v1h-2zM303 246h2v1h-2zM937 101h2v1h-2zM391 197h2v1h-2zM318 240h2v1h-2zM395 194h2v1h-2zM457 152h2v1h-2zM518 121h3v1h-3zM652 121h4v1h-4zM896 121h3v1h-3zM483 137h2v1h-2zM774 137h6v1h-6zM833 137h4v1h-4zM948 96h3v1h-3zM963 90h3v1h-3zM349 222h1v1h-1zM13 250h3v1h-3zM293 250h3v1h-3zM361 214h2v1h-2zM353 219h2v1h-2zM440 161h2v1h-2zM934 103h1v1h-1zM925 108h2v1h-2zM529 117h3v1h-3zM639 117h2v1h-2zM908 117h2v1h-2zM31 258h2v1h-2zM271 258h3v1h-3zM414 180h1v1h-1zM371 209h2v1h-2zM399 191h2v1h-2zM943 98h3v1h-3zM23 254h2v1h-2zM283 254h3v1h-3zM403 188h2v1h-2zM27 256h2v1h-2zM277 256h3v1h-3zM471 144h2v1h-2zM310 243h3v1h-3zM463 149h2v1h-2zM19 252h2v1h-2zM289 252h2v1h-2zM468 146h1v1h-1zM436 163h2v1h-2zM429 168h2v1h-2zM417 177h2v1h-2zM367 211h2v1h-2zM433 165h2v1h-2zM421 174h2v1h-2zM459 151h2v1h-2zM385 201h2v1h-2zM390 198h1v1h-1zM343 226h1v1h-1zM363 213h2v1h-2zM355 218h1v1h-1zM932 104h2v1h-2zM332 234h2v1h-2zM359 215h2v1h-2zM401 190h1v1h-1zM336 231h2v1h-2zM416 178h1v1h-1zM951 95h2v1h-2zM405 187h1v1h-1zM382 203h2v1h-2zM448 157h2v1h-2zM409 184h1v1h-1zM394 195h1v1h-1zM347 223h2v1h-2zM328 236h2v1h-2zM420 175h1v1h-1zM424 172h1v1h-1zM444 159h2v1h-2zM308 244h2v1h-2zM428 169h1v1h-1zM453 154h2v1h-2zM958 92h3v1h-3zM334 233h1v1h-1zM338 230h1v1h-1zM432 166h1v1h-1zM384 202h1v1h-1zM375 207h2v1h-2zM450 156h1v1h-1zM330 235h2v1h-2zM342 227h1v1h-1zM473 143h1v1h-1zM346 224h1v1h-1zM380 204h2v1h-2zM411 182h1v1h-1zM415 179h1v1h-1zM419 176h1v1h-1zM465 148h1v1h-1zM956 93h2v1h-2zM352 220h1v1h-1zM398 192h1v1h-1zM402 189h1v1h-1zM929 106h1v1h-1zM406 186h1v1h-1zM387 200h1v1h-1zM379 205h1v1h-1zM410 183h1v1h-1z"/>
<path fill="#00ff00" d="M67 132h4v1h-4zM1007 132h4v1h-4zM192 174h2v1h-2zM824 174h6v1h-6zM94 139h3v1h-3zM970 139h6v1h-6zM311 206h4v1h-4zM498 206h8v1h-8zM145 158h3v1h-3zM898 158h4v1h-4zM299 203h4v1h-4zM532 203h29v1h-29zM636 203h29v1h-29zM322 209h4v1h-4zM458 209h15v1h-15zM161 163h3v1h-3zM878 163h4v1h-4zM189 173h3v1h-3zM830 173h5v1h-5zM97 140h2v1h-2zM966 140h4v1h-4zM218 182h4v1h-4zM783 182h6v1h-6zM255 192h3v1h-3zM731 192h4v1h-4zM335 212h8v1h-8zM413 212h15v1h-15zM289 201h5v1h-5zM576 201h45v1h-45zM680 201h11v1h-11zM294 202h5v1h-5zM561 202h15v1h-15zM621 202h15v1h-15zM665 202h15v1h-15zM75 134h4v1h-4zM998 134h4v1h-4zM83 136h4v1h-4zM988 136h6v1h-6zM343 213h11v1h-11zM398 213h15v1h-15zM204 178h4v1h-4zM804 178h5v1h-5zM148 159h4v1h-4zM894 159h4v1h-4zM284 200h5v1h-5zM691 200h8v1h-8zM211 180h4v1h-4zM794 180h5v1h-5zM233 186h4v1h-4zM758 186h4v1h-4zM318 208h4v1h-4zM473 208h14v1h-14zM108 144h2v1h-2zM949 144h5v1h-5zM47 127h4v1h-4zM1027 127h1v1h-1zM251 191h4v1h-4zM735 191h5v1h-5zM330 211h5v1h-5zM428 211h15v1h-15zM121 149h3v1h-3zM929 149h4v1h-4zM139 156h3v1h-3zM905 156h4v1h-4zM11 117h3v1h-3zM155 161h3v1h-3zM886 161h4v1h-4zM184 171h2v1h-2zM841 171h5v1h-5zM170 166h3v1h-3zM866 166h4v1h-4zM29 122h3v1h-3zM105 143h3v1h-3zM954 143h4v1h-4zM354 214h44v1h-44zM51 128h4v1h-4zM1023 128h4v1h-4zM240 188h4v1h-4zM749 188h4v1h-4zM265 195h4v1h-4zM718 195h4v1h-4zM197 176h3v1h-3zM814 176h5v1h-5zM181 170h3v1h-3zM846 170h5v1h-5zM79 135h4v1h-4zM994 135h4v1h-4zM222 183h4v1h-4zM776 183h7v1h-7zM244 189h3v1h-3zM744 189h5v1h-5zM280 199h4v1h-4zM699 199h6v1h-6zM116 147h3v1h-3zM937 147h4v1h-4zM303 204h4v1h-4zM517 204h15v1h-15zM71 133h4v1h-4zM1002 133h5v1h-5zM229 185h4v1h-4zM762 185h6v1h-6zM315 207h3v1h-3zM487 207h11v1h-11zM164 164h3v1h-3zM874 164h4v1h-4zM326 210h4v1h-4zM443 210h15v1h-15zM7 116h4v1h-4zM262 194h3v1h-3zM722 194h5v1h-5zM55 129h4v1h-4zM1019 129h4v1h-4zM110 145h3v1h-3zM945 145h4v1h-4zM276 198h4v1h-4zM705 198h4v1h-4zM208 179h3v1h-3zM799 179h5v1h-5zM87 137h4v1h-4zM982 137h6v1h-6zM226 184h3v1h-3zM768 184h8v1h-8zM175 168h3v1h-3zM857 168h5v1h-5zM237 187h3v1h-3zM753 187h5v1h-5zM36 124h3v1h-3zM158 162h3v1h-3zM882 162h4v1h-4zM173 167h2v1h-2zM862 167h4v1h-4zM18 119h4v1h-4zM269 196h4v1h-4zM713 196h5v1h-5zM113 146h3v1h-3zM941 146h4v1h-4zM59 130h4v1h-4zM1015 130h4v1h-4zM247 190h4v1h-4zM740 190h4v1h-4zM307 205h4v1h-4zM506 205h11v1h-11zM186 172h3v1h-3zM835 172h6v1h-6zM32 123h4v1h-4zM133 154h3v1h-3zM912 154h4v1h-4zM91 138h3v1h-3zM976 138h6v1h-6zM14 118h4v1h-4zM258 193h4v1h-4zM727 193h4v1h-4zM63 131h4v1h-4zM1011 131h4v1h-4zM152 160h3v1h-3zM890 160h4v1h-4zM194 175h3v1h-3zM819 175h5v1h-5zM129 152h2v1h-2zM919 152h3v1h-3zM43 126h4v1h-4zM142 157h3v1h-3zM902 157h3v1h-3zM99 141h3v1h-3zM962 141h4v1h-4zM127 151h2v1h-2zM922 151h4v1h-4zM273 197h3v1h-3zM709 197h4v1h-4zM119 148h2v1h-2zM933 148h4v1h-4zM200 177h4v1h-4zM809 177h5v1h-5zM131 153h2v1h-2zM916 153h3v1h-3zM215 181h3v1h-3zM789 181h5v1h-5zM136 155h3v1h-3zM909 155h3v1h-3zM39 125h4v1h-4zM124 150h3v1h-3zM926 150h3v1h-3zM167 165h3v1h-3zM870 165h4v1h-4zM22 120h3v1h-3zM178 169h3v1h-3zM851 169h6v1h-6zM102 142h3v1h-3zM958 142h4v1h-4zM25 121h4v1h-4zM5 115h2v1h-2z"/>
<path fill="#c0c0c0" d="M102 110h74v1h-74zM221 113h29v1h-29zM309 117h178v1h-178zM517 117h30v1h-30zM665 127h11v1h-11zM684 129h11v1h-11zM784 136h15v1h-15zM1006 141h15v1h-15zM13 106h30v1h-30zM72 109h30v1h-30zM799 137h178v1h-178zM995 140h11v1h-11zM695 130h11v1h-11zM714 132h25v1h-25zM646 125h8v1h-8zM547 118h44v1h-44zM591 119h15v1h-15zM1021 142h7v1h-7zM706 131h8v1h-8zM739 133h15v1h-15zM606 120h11v1h-11zM295 116h14v1h-14zM487 116h30v1h-30zM250 114h30v1h-30zM176 111h30v1h-30zM617 121h8v1h-8zM987 139h8v1h-8zM43 107h15v1h-15zM639 124h7v1h-7zM58 108h14v1h-14zM754 134h15v1h-15zM206 112h15v1h-15zM280 115h15v1h-15zM769 135h15v1h-15zM977 138h10v1h-10zM676 128h8v1h-8zM632 123h7v1h-7zM654 126h11v1h-11zM625 122h7v1h-7zM5 105h8v1h-8z"/>
<path fill="#0000ff" d="M680 138h119v1h-119zM117 119h29v1h-29zM221 119h29v1h-29zM665 137h15v1h-15zM799 137h103v1h-103zM917 137h15v1h-15zM991 137h37v1h-37zM547 130h14v1h-14zM650 136h15v1h-15zM902 136h15v1h-15zM932 136h59v1h-59zM191 117h15v1h-15zM102 120h15v1h-15zM250 120h15v1h-15zM13 124h30v1h-30zM324 124h45v1h-45zM473 129h14v1h-14zM502 129h45v1h-45zM428 128h45v1h-45zM487 128h15v1h-15zM58 122h29v1h-29zM280 122h29v1h-29zM146 118h45v1h-45zM206 118h15v1h-15zM87 121h15v1h-15zM265 121h15v1h-15zM561 131h15v1h-15zM591 133h15v1h-15zM384 126h29v1h-29zM43 123h15v1h-15zM309 123h15v1h-15zM606 134h15v1h-15zM621 135h29v1h-29zM5 125h8v1h-8zM369 125h15v1h-15zM413 127h15v1h-15zM576 132h15v1h-15z"/>
<path fill="#ffffff" d="M706 426h1v8h-1zM698 426h1v8h-1zM693 467h1v8h-1zM709 450h1v9h-1zM687 515h1v5h-1zM705 418h1v8h-1zM691 483h1v8h-1zM717 515h1v5h-1zM697 434h1v8h-1zM708 442h1v8h-1zM701 402h1v8h-1zM692 475h1v8h-1zM696 442h1v8h-1zM711 467h1v8h-1zM707 434h1v8h-1zM713 483h1v8h-1zM714 491h1v8h-1zM700 410h1v8h-1zM695 450h1v8h-1zM699 418h1v8h-1zM716 507h1v8h-1zM690 491h1v8h-1zM694 458h1v9h-1zM703 402h1v8h-1zM715 499h1v8h-1zM689 499h1v8h-1zM712 475h1v8h-1zM704 410h1v8h-1zM710 459h1v8h-1zM688 507h1v8h-1zM702 397h1v5h-1zM5 519h682v1h-682zM718 519h310v1h-310z"/>
</g>
<g fill="none" stroke="#d0d0d0" stroke-width="1">
<path d="M62 356.5 L50.5 356.5 M54 353.5 L50.5 356.5 L54 359.5"/>
</g>
<g shape-rendering="crispEdges">
<path fill="#c8c8c8" d="M451 25h3v1h-3zM450 26h1v3h-1z"/>
<path fill="#c8c8c8" d="M451 27h2v1h-2zM457 29h4v1h-4zM453 28h4v1h-4zM461 30h1v1h-1z"/>
</g>
</svg>
<div class="t" style="left:3px;top:5px;width:540px;height:14px">
<span style="left:-1px;top:1.5px;color:#c8c8c8;letter-spacing:0.2px">兴蓉环境(日线)</span>
<span class="l" style="left:103.5px;color:#fff">MA5: 7.16</span>
<span class="l" style="left:166px;color:#ffff00">MA10: 7.20</span>
<span class="l" style="left:236.5px;color:#ff00ff">MA20: 7.19</span>
<span class="l" style="left:306.5px;color:#00ff00">MA60: 7.09</span>
<span class="l" style="left:376.5px;color:#c8c8c8">MA120: 7.06</span>
<span class="l" style="left:453.5px;color:#0000ff">MA250: 7.07</span>
</div>
<div class="ic" style="left:90px;top:7px"><svg width="12" height="12" viewBox="0 0 12 12"><path d="M3.1 4.7 L6 7.4 L8.9 4.7" fill="none" stroke="#1a1a22" stroke-width="1.3"/></svg></div>
<div class="t" style="left:464px;top:26px">7.33</div>
<div class="t" style="left:64px;top:350px">6.56</div>
<div id="cai">财</div>
<div class="ic" style="left:1px;top:378px"><svg width="12" height="12" viewBox="0 0 12 12"><path d="M3.1 4.7 L6 7.4 L8.9 4.7" fill="none" stroke="#1a1a22" stroke-width="1.3"/></svg></div>
<div class="t" style="left:17px;top:377.5px;width:200px;height:14px">
<span style="left:0;color:#c8c8c8">大资金合力F</span>
<span style="left:72px;color:#fff">大资金合力: 0.00</span>
</div>
<div id="wm"><div class="a">好公式网</div><div class="b">www.goodgongshi.com</div></div>
<div class="ic" style="left:1px;top:524px"></div>
<div class="t" style="left:17px;top:523px;width:400px;height:14px">
<span style="left:0;color:#c8c8c8">DMI(14,6)</span>
<span style="left:63px;color:#fff">PDI: 31.98</span>
<span style="left:125px;color:#ffff00">MDI: 25.11</span>
<span style="left:196px;color:#ff00ff">ADX: 21.98</span>
<span style="left:264px;color:#00ff00">ADXR: 23.93</span>
</div>
</body></html>
